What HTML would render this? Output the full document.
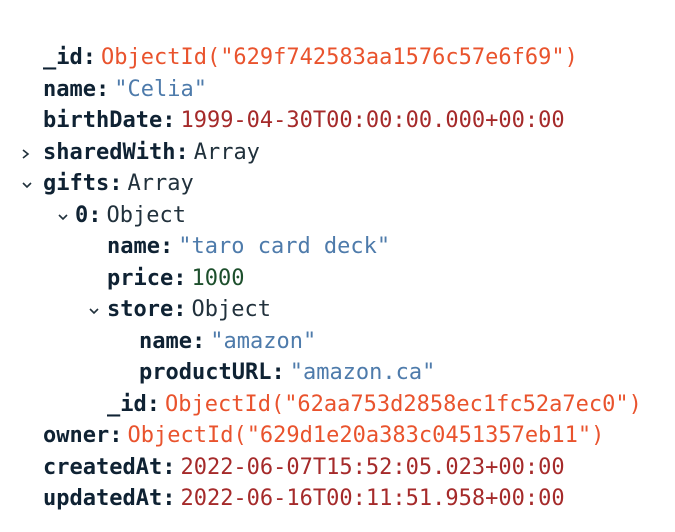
<!DOCTYPE html>
<html><head><meta charset="utf-8"><style>
html,body{margin:0;padding:0;background:#fff;width:675px;height:532px;overflow:hidden}
.r{position:absolute;height:32px;line-height:32px;font-family:"DejaVu Sans Mono","Liberation Mono",monospace;font-size:22px;white-space:pre;color:#21313c}
.k{font-weight:bold;color:#0f2233}
.v{margin-left:5px}
.o{color:#e9532d}.s{color:#4e7bab}.d{color:#a52a2a}.n{color:#1d4f2c}.t{color:#21313c}
svg{position:absolute}
</style></head><body>
<div class="r" style="left:43px;top:42px"><span class="k">_id:</span><span class="v o">ObjectId("629f742583aa1576c57e6f69")</span></div>
<div class="r" style="left:43px;top:74px"><span class="k">name:</span><span class="v s">"Celia"</span></div>
<div class="r" style="left:43px;top:105px"><span class="k">birthDate:</span><span class="v d">1999-04-30T00:00:00.000+00:00</span></div>
<svg style="left:21px;top:148px" width="10" height="12"><path d="M2 2 L7 6 L2 10" fill="none" stroke="#21313c" stroke-width="1.6"/></svg>
<div class="r" style="left:43px;top:137px"><span class="k">sharedWith:</span><span class="v t">Array</span></div>
<svg style="left:21px;top:180px" width="12" height="10"><path d="M2 3 L6 7 L10 3" fill="none" stroke="#21313c" stroke-width="1.6"/></svg>
<div class="r" style="left:43px;top:168px"><span class="k">gifts:</span><span class="v t">Array</span></div>
<svg style="left:57px;top:212px" width="12" height="10"><path d="M2 3 L6 7 L10 3" fill="none" stroke="#21313c" stroke-width="1.6"/></svg>
<div class="r" style="left:75px;top:200px"><span class="k">0:</span><span class="v t">Object</span></div>
<div class="r" style="left:107px;top:231px"><span class="k">name:</span><span class="v s">"taro card deck"</span></div>
<div class="r" style="left:107px;top:263px"><span class="k">price:</span><span class="v n">1000</span></div>
<svg style="left:88px;top:306px" width="12" height="10"><path d="M2 3 L6 7 L10 3" fill="none" stroke="#21313c" stroke-width="1.6"/></svg>
<div class="r" style="left:107px;top:294px"><span class="k">store:</span><span class="v t">Object</span></div>
<div class="r" style="left:139px;top:326px"><span class="k">name:</span><span class="v s">"amazon"</span></div>
<div class="r" style="left:139px;top:357px"><span class="k">productURL:</span><span class="v s">"amazon.ca"</span></div>
<div class="r" style="left:107px;top:389px"><span class="k">_id:</span><span class="v o">ObjectId("62aa753d2858ec1fc52a7ec0")</span></div>
<div class="r" style="left:43px;top:420px"><span class="k">owner:</span><span class="v o">ObjectId("629d1e20a383c0451357eb11")</span></div>
<div class="r" style="left:43px;top:452px"><span class="k">createdAt:</span><span class="v d">2022-06-07T15:52:05.023+00:00</span></div>
<div class="r" style="left:43px;top:483px"><span class="k">updatedAt:</span><span class="v d">2022-06-16T00:11:51.958+00:00</span></div>
</body></html>
